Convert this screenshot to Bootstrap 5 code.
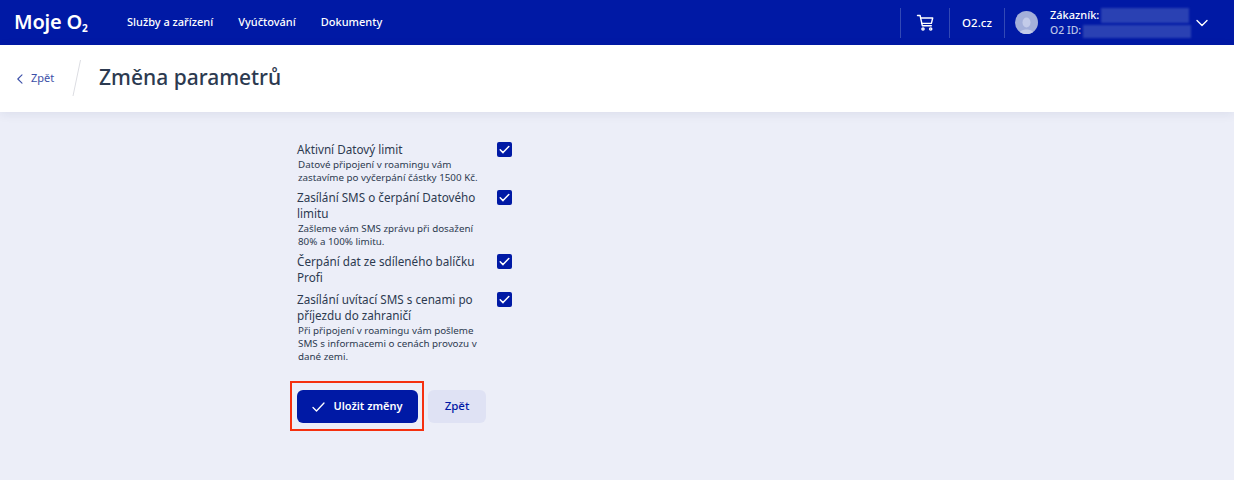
<!DOCTYPE html>
<html lang="cs">
<head>
    <meta charset="UTF-8">
    <meta name="viewport" content="width=device-width, initial-scale=1.0">
    <title>Změna parametrů</title>
    <link href="https://cdn.jsdelivr.net/npm/bootstrap@5.3.0/dist/css/bootstrap.min.css" rel="stylesheet">
    <style>
        body { background: #eceef8; font-family: "Noto Sans", "Open Sans", sans-serif; color: #2c3a50; height: 480px; overflow: hidden; }
        .top-bar { background: #0019a5; height: 45px; color: #fff; padding-left: 14px; }
        .brand-name { font-size: 20px; font-weight: 600; line-height: 1; width: 113px; color: #fff; letter-spacing: -.2px; margin-top: -2px; }
        .brand-name sub { font-size: 10px; font-weight: 700; bottom: -.3em; }
        .top-link { color: #fff; font-size: 11px; font-weight: 500; text-decoration: none; margin-right: 25px; }
        .top-cell { height: 30px; border-left: 1px solid #3349b5; }
        .cart-cell { width: 49px; }
        .site-cell { width: 55px; }
        .site-link { font-size: 11.500px; font-weight: 500; }
        .user-cell { padding-left: 10px; }
        .avatar { width: 23px; height: 23px; border-radius: 50%; background: #a3afda; overflow: hidden; }
        .user-text { margin-left: 12px; font-size: 11px; font-weight: 500; line-height: 15px; width: 143px; }
        .user-text .dim { color: #b9c2e6; font-size: 10.500px; }
        .blur-box { display: inline-block; background: #2a41b3; vertical-align: middle; filter: blur(1px); }
        .blur-name { width: 88px; height: 15px; margin-left: 2px; }
        .blur-id { width: 108px; height: 13px; margin-left: 2px; }
        .chevron-cell { margin-left: 3px; }
        .sub-bar { background: #fff; height: 67px; padding-left: 16px; padding-bottom: 2px; box-shadow: 0 2px 10px rgba(30, 40, 90, .08); }
        .back-link { color: #3c50a8; font-size: 11px; text-decoration: none; width: 56px; gap: 7px; margin-top: 2px; }
        .slash-line { width: 10px; height: 36px; margin-right: 17px; }
        .page-title { font-size: 21px; font-weight: 500; margin: 0; color: #2c3a50; }
        .form-area { width: 215px; margin-left: 297px; padding-top: 30px; }
        .opt-row { margin-bottom: 6px; }
        .opt-text { width: 184px; flex: none; }
        .opt-name { font-size: 11.700px; line-height: 16px; font-weight: 400; margin-top: -1px; margin-bottom: 1px; }
        .opt-note { font-size: 9.800px; line-height: 13px; padding-left: 1px; }
        .opt-check { width: 15px; height: 15px; background: #0019a5; border-radius: 2px; flex: none; }
        .save-frame { border: 2px solid #f5300f; padding: 7px 4px 6px 5px; margin-left: -7px; }
        .save-btn { background: #0019a5; color: #fff; width: 121px; height: 33px; border: 0; border-radius: 6px; font-size: 11px; font-weight: 600; gap: 8px; padding: 0; }
        .save-btn:hover { background: #0019a5; color: #fff; }
        .alt-btn { background: #dfe2f4; color: #0019a5; width: 58px; height: 33px; border: 0; border-radius: 6px; font-size: 11.500px; font-weight: 500; padding: 0; margin-left: 4px; }
        .btn-row { margin-top: 18px; width: 300px; }
    </style>
</head>
<body>
    <!-- Top bar -->
    <nav class="top-bar d-flex align-items-center">
        <a class="brand-name text-decoration-none" href="#">Moje O<sub>2</sub></a>
        <a class="top-link" href="#">Služby a zařízení</a>
        <a class="top-link" href="#">Vyúčtování</a>
        <a class="top-link" href="#">Dokumenty</a>
        <div class="ms-auto d-flex align-items-center">
            <div class="top-cell cart-cell d-flex align-items-center justify-content-center">
                <svg width="19" height="18" viewBox="0 0 18 18" fill="none" stroke="#fff" stroke-width="1.400" stroke-linecap="round" stroke-linejoin="round"><path d="M1 1.500h2.600l2.200 10.200h9"/><path d="M4.200 4h12l-1.300 5.400H5.200"/><circle cx="6.500" cy="15" r="1.100"/><circle cx="14.200" cy="15" r="1.100"/></svg>
            </div>
            <div class="top-cell site-cell d-flex align-items-center justify-content-center">
                <a class="site-link text-white text-decoration-none" href="#">O2.cz</a>
            </div>
            <div class="top-cell user-cell d-flex align-items-center">
                <div class="avatar">
                    <svg width="23" height="23" viewBox="0 0 23 23"><ellipse cx="11.500" cy="9.500" rx="4" ry="5" fill="#c3cbe9"/><path d="M3.500 23c.5-5 4-6.500 8-6.500s7.500 1.500 8 6.500z" fill="#c3cbe9"/></svg>
                </div>
                <div class="user-text">
                    <div class="text-nowrap">Zákazník:<span class="blur-box blur-name"></span></div>
                    <div class="text-nowrap dim">O2 ID:<span class="blur-box blur-id"></span></div>
                </div>
                <div class="chevron-cell d-flex">
                    <svg width="12" height="8" viewBox="0 0 12 8" fill="none" stroke="#fff" stroke-width="1.400" stroke-linecap="round" stroke-linejoin="round"><path d="M1 1.500l5 5 5-5"/></svg>
                </div>
                <div style="width:26px"></div>
            </div>
        </div>
    </nav>

    <!-- Page heading -->
    <div class="sub-bar d-flex align-items-center">
        <a class="back-link d-flex align-items-center" href="#">
            <svg width="8" height="10" viewBox="0 0 8 10" fill="none" stroke="#3c50a8" stroke-width="1.100" stroke-linecap="round" stroke-linejoin="round"><path d="M6 .8L1.800 5 6 9.200"/></svg>
            Zpět
        </a>
        <svg class="slash-line" viewBox="0 0 10 36"><path d="M8.500 0L1 36" stroke="#dcdde2" stroke-width="1"/></svg>
        <h1 class="page-title">Změna parametrů</h1>
    </div>

    <!-- Options -->
    <div class="form-area">
        <div class="opt-row d-flex justify-content-between">
            <div class="opt-text">
                <div class="opt-name">Aktivní Datový limit</div>
                <div class="opt-note">Datové připojení v roamingu vám zastavíme po vyčerpání částky 1500 Kč.</div>
            </div>
            <div class="opt-check d-flex align-items-center justify-content-center">
                <svg width="11" height="9" viewBox="0 0 11 9" fill="none" stroke="#fff" stroke-width="1.500" stroke-linecap="round" stroke-linejoin="round"><path d="M1.200 4.800l2.800 2.800 5.800-6"/></svg>
            </div>
        </div>
        <div class="opt-row d-flex justify-content-between">
            <div class="opt-text">
                <div class="opt-name">Zasílání SMS o čerpání Datového limitu</div>
                <div class="opt-note">Zašleme vám SMS zprávu při dosažení 80% a 100% limitu.</div>
            </div>
            <div class="opt-check d-flex align-items-center justify-content-center">
                <svg width="11" height="9" viewBox="0 0 11 9" fill="none" stroke="#fff" stroke-width="1.500" stroke-linecap="round" stroke-linejoin="round"><path d="M1.200 4.800l2.800 2.800 5.800-6"/></svg>
            </div>
        </div>
        <div class="opt-row d-flex justify-content-between">
            <div class="opt-text">
                <div class="opt-name">Čerpání dat ze sdíleného balíčku Profi</div>
            </div>
            <div class="opt-check d-flex align-items-center justify-content-center">
                <svg width="11" height="9" viewBox="0 0 11 9" fill="none" stroke="#fff" stroke-width="1.500" stroke-linecap="round" stroke-linejoin="round"><path d="M1.200 4.800l2.800 2.800 5.800-6"/></svg>
            </div>
        </div>
        <div class="opt-row d-flex justify-content-between">
            <div class="opt-text">
                <div class="opt-name">Zasílání uvítací SMS s cenami po příjezdu do zahraničí</div>
                <div class="opt-note">Při připojení v roamingu vám pošleme SMS s informacemi o cenách provozu v dané zemi.</div>
            </div>
            <div class="opt-check d-flex align-items-center justify-content-center">
                <svg width="11" height="9" viewBox="0 0 11 9" fill="none" stroke="#fff" stroke-width="1.500" stroke-linecap="round" stroke-linejoin="round"><path d="M1.200 4.800l2.800 2.800 5.800-6"/></svg>
            </div>
        </div>

        <div class="btn-row d-flex align-items-center">
            <div class="save-frame">
                <button class="btn save-btn d-flex align-items-center justify-content-center">
                    <svg width="13" height="10" viewBox="0 0 13 10" fill="none" stroke="#fff" stroke-width="1.300" stroke-linecap="round" stroke-linejoin="round"><path d="M1 5.500l3.500 3.500 7.500-8"/></svg>
                    Uložit změny
                </button>
            </div>
            <button class="btn alt-btn">Zpět</button>
        </div>
    </div>

    <script src="https://cdn.jsdelivr.net/npm/bootstrap@5.3.0/dist/js/bootstrap.bundle.min.js"></script>
</body>
</html>
